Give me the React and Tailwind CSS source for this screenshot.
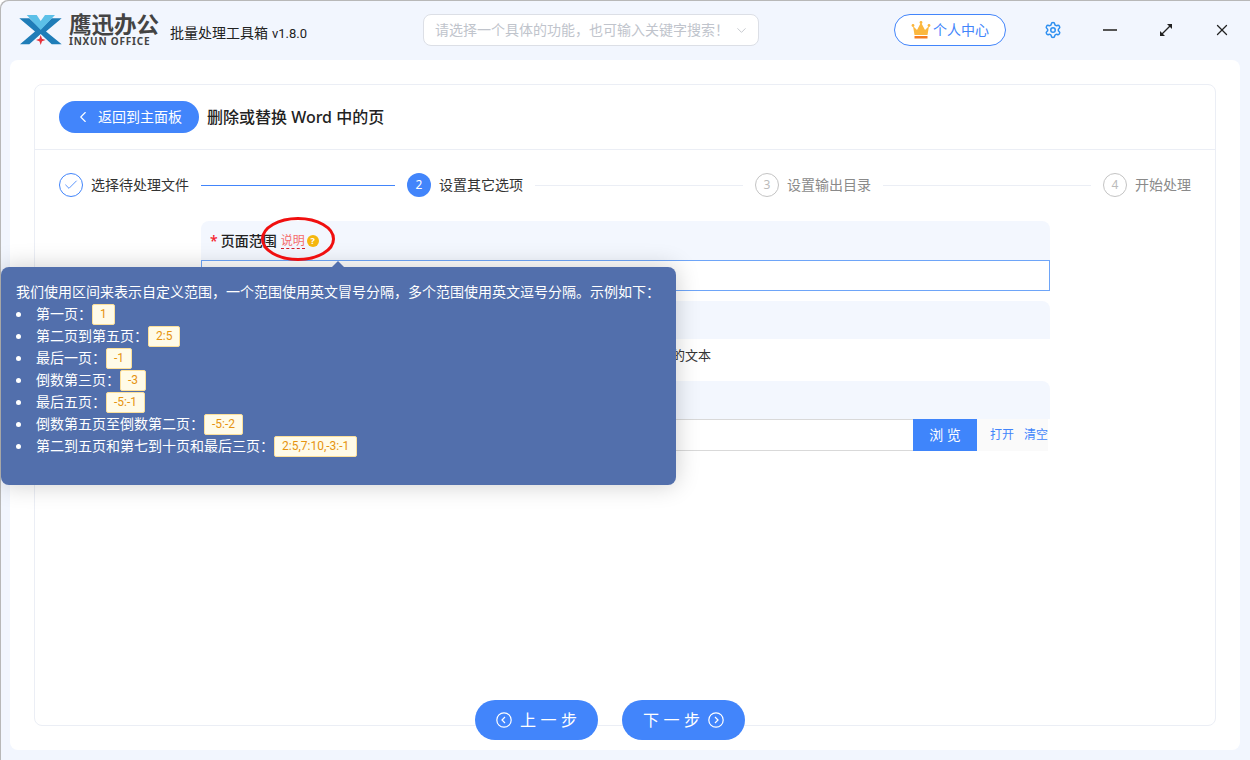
import { ChevronLeft, ChevronDown, Settings, Check, X } from 'lucide-react';

const tips = [
  ['第一页：', '1'],
  ['第二页到第五页：', '2:5'],
  ['最后一页：', '-1'],
  ['倒数第三页：', '-3'],
  ['最后五页：', '-5:-1'],
  ['倒数第五页至倒数第二页：', '-5:-2'],
  ['第二到五页和第七到十页和最后三页：', '2:5,7:10,-3:-1'],
];

const Logo = () => (
  <svg width="46" height="34" viewBox="0 0 46 34" className="shrink-0">
    <path d="M1.3 5.3 L11.3 5.3 L22.7 16 L33.7 5.3 L43.7 5.3 L28 18.5 L43.7 31.3 L33.7 31.3 L22.7 21 L11.3 31.3 L2 31.3 L17 18.5 Z" fill="#1f7db8" />
    <path d="M8.7 2 L18.7 2 L22.7 8 L27 2 L37 2 L22.7 17 Z" fill="#5cc0e8" />
    <path d="M22.7 22 L24 25.8 L27.5 27 L24 28.2 L22.7 32 L21.4 28.2 L18 27 L21.4 25.8 Z" fill="#e8333c" />
  </svg>
);

const Crown = () => (
  <svg width="20" height="20" viewBox="0 0 20 20">
    <path d="M2 6 L6 10 L10 2.5 L14 10 L18 6 L16.5 15 L3.5 15 Z" fill="#fbb73e" />
    <circle cx="2" cy="5.5" r="1.4" fill="#fbb73e" />
    <circle cx="18" cy="5.5" r="1.4" fill="#fbb73e" />
    <circle cx="10" cy="2.5" r="1.4" fill="#fbb73e" />
    <rect x="3.5" y="16" width="13" height="2.5" fill="#f47b20" />
  </svg>
);

const ExpandIcon = () => (
  <svg width="16" height="16" viewBox="0 0 16 16" fill="none" stroke="#222" strokeWidth="1.3">
    <path d="M4 12 L12 4" />
    <path d="M9 2 L14 2 L14 7 Z" fill="#222" stroke="none" />
    <path d="M7 14 L2 14 L2 9 Z" fill="#222" stroke="none" />
  </svg>
);

const CircleArrow = ({ flip }) => (
  <svg width="16" height="16" viewBox="0 0 16 16" fill="none" stroke="#fff" strokeWidth="1.2">
    <circle cx="8" cy="8" r="7.2" />
    <path d={flip ? 'M7 5 L10 8 L7 11' : 'M9 5 L6 8 L9 11'} />
  </svg>
);

const Step = ({ n, text, state }) => (
  <div className="flex items-center gap-2 shrink-0">
    {state === 'done' && (
      <span className="w-6 h-6 rounded-full border border-[#4285fb] flex items-center justify-center text-[#4285fb]">
        <Check size={16} strokeWidth={1.3} />
      </span>
    )}
    {state === 'active' && (
      <span className="w-6 h-6 rounded-full bg-[#4285fb] flex items-center justify-center text-xs text-white">{n}</span>
    )}
    {state === 'todo' && (
      <span className="w-6 h-6 rounded-full border border-[#c4c4c4] flex items-center justify-center text-xs text-[#bbbbbb]">{n}</span>
    )}
    <span className={`text-sm ${state === 'todo' ? 'text-[#8a8a8a]' : 'text-[#333333]'}`}>{text}</span>
  </div>
);

export default function App() {
  return (
    <div className="relative w-[1250px] h-[760px] overflow-hidden bg-[#f2f6fe] rounded-tl-lg shadow-[inset_1px_1px_0_#b8b8b8] font-['Noto_Sans','Noto_Sans_CJK_SC',sans-serif] text-[#333333]">
      {/* title bar */}
      <div className="flex items-center h-[60px] pl-[18px]">
        <Logo />
        <div className="ml-[5px] w-[101px] flex flex-col">
          <span className="text-[22.5px] leading-[23px] font-bold text-[#444444] whitespace-nowrap">鹰迅办公</span>
          <span className="text-[10px] leading-[11px] font-bold tracking-[0.8px] text-[#444444] whitespace-nowrap">INXUN OFFICE</span>
        </div>
        <span className="mt-[6px] text-sm text-[#222222] w-[253px] whitespace-nowrap">
          批量处理工具箱<span className="ml-1 text-[13px] font-['Roboto',sans-serif]">v1.8.0</span>
        </span>
        <div className="w-[336px] h-8 rounded-lg bg-white border border-[#dcdfe6] flex items-center pl-[11px] pr-[9px] justify-between">
          <span className="text-sm text-[#c0c4cc] whitespace-nowrap">请选择一个具体的功能，也可输入关键字搜索！</span>
          <ChevronDown size={15} strokeWidth={1.2} className="text-[#b4b8bf]" />
        </div>
        <div className="ml-[135px] w-[112px] h-8 rounded-full border border-[#4285fb] bg-white flex items-center pl-[16px] gap-[2px]">
          <Crown />
          <span className="text-sm text-[#4285fb]">个人中心</span>
        </div>
        <Settings size={18} strokeWidth={2} className="ml-[38px] text-[#2e8ff0]" />
        <div className="ml-[41px] w-[14px] h-[2px] bg-[#555555]" />
        <span className="ml-[41px]"><ExpandIcon /></span>
        <X size={18} strokeWidth={1.7} className="ml-[39px] text-[#222222]" />
      </div>

      {/* main panel */}
      <div className="relative w-[1230px] h-[690px] ml-[10px] bg-white rounded-lg p-[24px]">
        <div className="w-[1182px] h-[642px] rounded-lg border border-[#ebeef5]">
          <div className="flex items-center h-[65px] px-6 gap-2 border-b border-[#ebeef5]">
            <button className="w-[140px] h-8 rounded-full bg-[#4285fb] text-white flex items-center pl-[15px] gap-[6px] text-sm whitespace-nowrap">
              <ChevronLeft size={18} strokeWidth={1.5} />
              返回到主面板
            </button>
            <span className="text-base font-medium text-[#222222] whitespace-nowrap">删除或替换 Word 中的页</span>
          </div>

          <div className="flex items-center h-[70px] px-6">
            <Step text="选择待处理文件" state="done" />
            <div className="w-[194px] mx-3 h-px bg-[#4285fb]" />
            <Step n="2" text="设置其它选项" state="active" />
            <div className="w-[208px] mx-3 h-px bg-[#ebeef5]" />
            <Step n="3" text="设置输出目录" state="todo" />
            <div className="w-[208px] mx-3 h-px bg-[#ebeef5]" />
            <Step n="4" text="开始处理" state="todo" />
          </div>

          <div className="w-[849px] ml-[166px] mt-px">
            <div className="h-[39px] rounded-t-lg bg-[#f3f7fe] flex items-center pl-[9px] text-sm font-medium text-[#222222]">
              <span className="text-[#f5222d] mr-[3px]">*</span>
              页面范围
              <span className="ml-1 text-xs font-normal text-[#f56c6c] border-b border-dashed border-[#d4202a] leading-[15px]">说明</span>
              <span className="ml-[2px] w-3 h-3 rounded-full bg-[#f5b70f] text-[9px] leading-3 text-center font-bold text-white">?</span>
            </div>
            <div className="h-[31px] border border-[#6ea5f8] mb-[10px]" />
            <div className="h-[38px] rounded-t-lg bg-[#f3f7fe]" />
            <div className="h-[42px] w-[510px] pb-2 flex items-center justify-end text-[13px] text-[#333333]">只删除页面中的文本</div>
            <div className="h-[38px] rounded-t-lg bg-[#f3f7fe]" />
            <div className="flex h-8">
              <div className="flex-1 border-y border-[#d9d9d9]" />
              <button className="w-16 bg-[#3f85fb] text-white text-sm">浏 览</button>
              <div className="w-[71px] mr-[2px] bg-[#fafafa] flex items-center justify-between pl-[13px] text-xs text-[#4285fb]">
                <span>打开</span>
                <span>清空</span>
              </div>
            </div>
          </div>
        </div>

        <div className="absolute left-[465px] top-[640px] flex gap-6">
          <button className="w-[123px] h-10 rounded-full bg-[#4285fb] text-white flex items-center pl-[21px] gap-2 text-base tracking-[4.5px] whitespace-nowrap">
            <CircleArrow />
            上一步
          </button>
          <button className="w-[123px] h-10 rounded-full bg-[#4285fb] text-white flex items-center pl-[21px] gap-[3px] text-base tracking-[4.5px] whitespace-nowrap">
            下一步
            <CircleArrow flip />
          </button>
        </div>
      </div>

      {/* tooltip */}
      <div className="absolute left-[1px] top-[267px] w-[675px] h-[218px] rounded-lg bg-[#526fac] shadow-[0_0_24px_rgba(0,0,0,0.2)] pl-[15px] pt-[14px] text-sm text-white">
        <div className="absolute left-[330px] top-[-6px] w-0 h-0 border-x-[7px] border-x-transparent border-b-[7px] border-b-[#526fac]" />
        <div className="h-[22px] leading-[22px] whitespace-nowrap">我们使用区间来表示自定义范围，一个范围使用英文冒号分隔，多个范围使用英文逗号分隔。示例如下：</div>
        <ul>
          {tips.map(([label, code]) => (
            <li key={code} className="flex items-center h-[22px] leading-[22px] whitespace-nowrap">
              <span className="w-[5px] h-[5px] rounded-full bg-white mr-[15px]" />
              {label}
              <span className="h-[21px] px-[7px] bg-[#fffbe8] border border-[#fbdf9a] rounded-[2px] font-['Roboto',sans-serif] text-xs leading-[19px] text-[#e6930f]">{code}</span>
            </li>
          ))}
        </ul>
      </div>

      {/* red ellipse annotation */}
      <svg className="absolute left-[258px] top-[213px]" width="80" height="52" viewBox="0 0 80 52" fill="none">
        <ellipse cx="40" cy="26" rx="35.5" ry="20.5" stroke="#f00f0f" strokeWidth="3" />
      </svg>
    </div>
  );
}
